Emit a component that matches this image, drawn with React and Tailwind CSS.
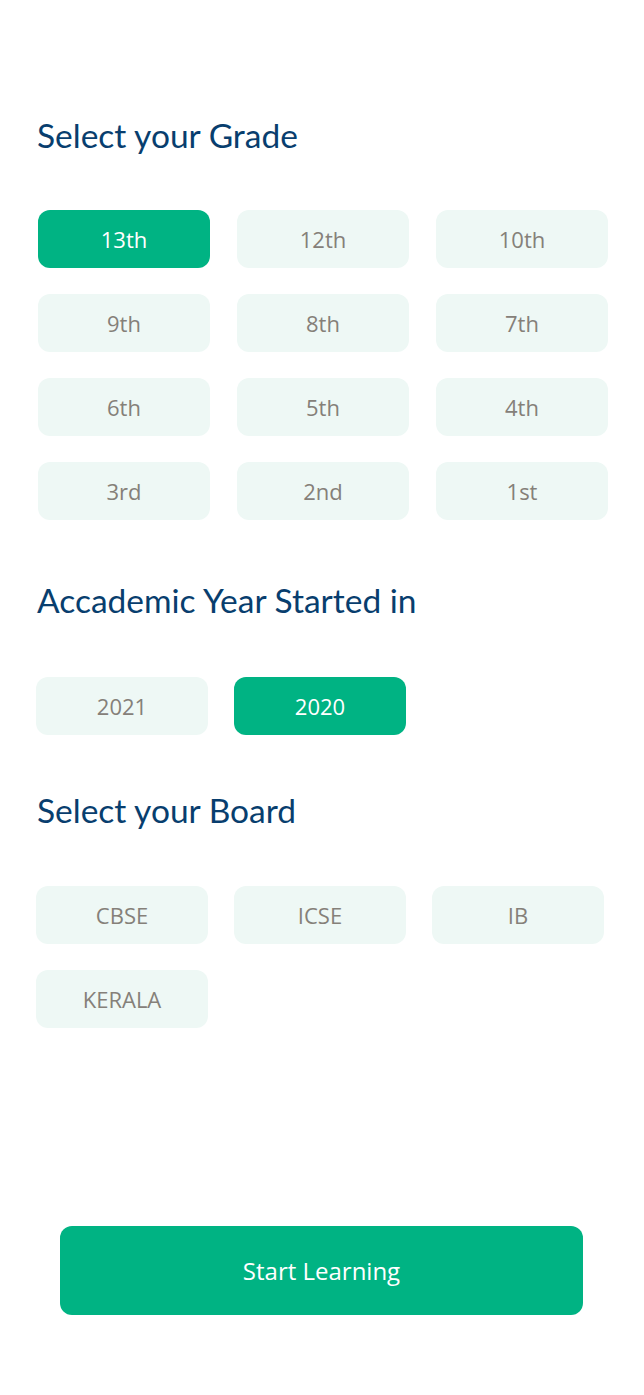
import { useState } from "react";

const grades = ["13th", "12th", "10th", "9th", "8th", "7th", "6th", "5th", "4th", "3rd", "2nd", "1st"];
const years = ["2021", "2020"];
const boards = ["CBSE", "ICSE", "IB", "KERALA"];

function Chip({ label, active, onClick }) {
  return (
    <button
      onClick={onClick}
      className={
        "h-[58px] w-[172px] rounded-[12px] text-[22px] flex items-center justify-center " +
        (active ? "bg-[#00b383] text-white" : "bg-[#eef8f5] text-[#858079]")
      }
    >
      {label}
    </button>
  );
}

function Heading({ children, className }) {
  return (
    <h2
      className={"h-[40px] flex items-center text-[33.5px] text-[#083e6e] " + (className || "")}
      style={{ fontFamily: "Lato, 'Open Sans', sans-serif" }}
    >
      {children}
    </h2>
  );
}

export default function App() {
  const [grade, setGrade] = useState("13th");
  const [year, setYear] = useState("2020");
  const [board, setBoard] = useState(null);

  return (
    <div
      className="min-h-[1395px] w-[644px] bg-white px-[37px] pt-[115px]"
      style={{ fontFamily: "'Open Sans', Lato, sans-serif" }}
    >
      <Heading>Select your Grade</Heading>
      <div className="ml-[1px] mt-[55px] grid grid-cols-[172px_172px_172px] gap-x-[27px] gap-y-[26px]">
        {grades.map((g) => (
          <Chip key={g} label={g} active={grade === g} onClick={() => setGrade(g)} />
        ))}
      </div>

      <Heading className="mt-[60px]">Accademic Year Started in</Heading>
      <div className="-ml-[1px] mt-[57px] grid grid-cols-[172px_172px_172px] gap-x-[26px]">
        {years.map((y) => (
          <Chip key={y} label={y} active={year === y} onClick={() => setYear(y)} />
        ))}
      </div>

      <Heading className="mt-[55px]">Select your Board</Heading>
      <div className="-ml-[1px] mt-[56px] grid grid-cols-[172px_172px_172px] gap-x-[26px] gap-y-[26px]">
        {boards.map((b) => (
          <Chip key={b} label={b} active={board === b} onClick={() => setBoard(b)} />
        ))}
      </div>

      <div className="mt-[198px] px-[23px]">
        <button className="h-[89px] w-[523px] rounded-[12px] bg-[#00b383] text-white text-[24px] flex items-center justify-center">
          Start Learning
        </button>
      </div>
    </div>
  );
}
